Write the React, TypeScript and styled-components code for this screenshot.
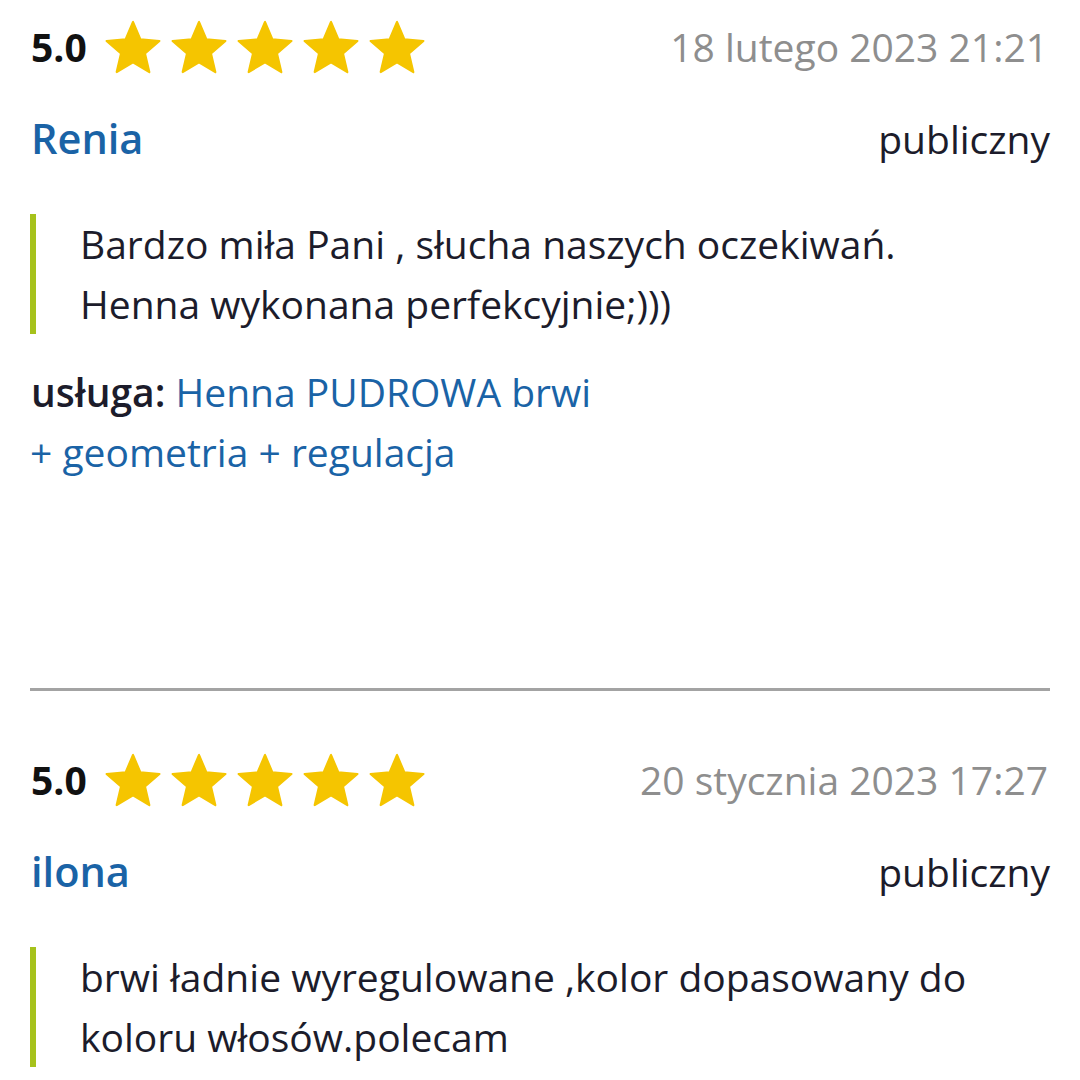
import React from "react";
import styled, { createGlobalStyle } from "styled-components";

const GlobalStyle = createGlobalStyle`
  html, body {
    margin: 0;
    padding: 0;
    background: #ffffff;
  }
  body {
    font-family: "Open Sans", "Noto Sans", "Liberation Sans", sans-serif;
    font-size: 39px;
    line-height: 60px;
    color: #1c1c2b;
  }
`;

const Page = styled.div`
  width: 1080px;
  height: 1080px;
  overflow: hidden;
  padding: 0 30px;
  box-sizing: border-box;
  display: flex;
  flex-direction: column;
`;

const Review = styled.article<{ $last?: boolean }>`
  display: flex;
  flex-direction: column;
  padding-top: 17px;
  padding-bottom: ${(p) => (p.$last ? "0" : "206px")};
  border-bottom: ${(p) => (p.$last ? "none" : "3px solid #a3a3a3")};
  margin-bottom: ${(p) => (p.$last ? "0" : "42px")};
`;

const TopRow = styled.div`
  display: flex;
  align-items: center;
  justify-content: space-between;
  height: 60px;
`;

const RatingGroup = styled.div`
  display: flex;
  align-items: center;
`;

const Score = styled.span`
  font-weight: 700;
  color: #111111;
  margin-left: 1px;
  margin-right: 18px;
`;

const Stars = styled.div`
  display: flex;
  align-items: center;
  gap: 10px;
`;

const StarIcon = styled.svg`
  width: 56px;
  height: 54px;
  display: block;
`;

const DateText = styled.span`
  color: #8e8e8e;
  margin-right: 2px;
`;

const NameRow = styled.div`
  display: flex;
  align-items: baseline;
  justify-content: space-between;
  margin-top: 31px;
`;

const Author = styled.span`
  font-weight: 600;
  font-size: 41.5px;
  color: #1a63a6;
  margin-left: 1px;
`;

const Visibility = styled.span`
  color: #1c1c2b;
`;

const Quote = styled.blockquote`
  margin: 45px 0 0 0;
  border-left: 6px solid #a6c21c;
  padding: 0 60px 0 44px;
`;

const Service = styled.div`
  margin-top: 28px;
  max-width: 578px;
`;

const ServiceLabel = styled.span`
  font-weight: 600;
  color: #1c1c2b;
  margin-left: 1px;
`;

const ServiceLink = styled.a`
  color: #1a63a6;
  text-decoration: none;
`;

const Star = () => (
  <StarIcon viewBox="1.4 1.4 21.2 20.2" aria-hidden="true">
    <path
      d="M12 17.27L18.18 21l-1.64-7.03L22 9.24l-7.19-.61L12 2 9.19 8.63 2 9.24l5.46 4.73L5.82 21z"
      fill="#f5c500"
      stroke="#f5c500"
      strokeWidth="0.8"
      strokeLinejoin="round"
    />
  </StarIcon>
);

type ReviewData = {
  date: string;
  author: string;
  text: string;
  service?: string;
};

const reviews: ReviewData[] = [
  {
    date: "18 lutego 2023 21:21",
    author: "Renia",
    text: "Bardzo miła Pani , słucha naszych oczekiwań. Henna wykonana perfekcyjnie;)))",
    service: "Henna PUDROWA brwi + geometria + regulacja",
  },
  {
    date: "20 stycznia 2023 17:27",
    author: "ilona",
    text: "brwi ładnie wyregulowane ,kolor dopasowany do koloru włosów.polecam",
  },
];

export default function App() {
  return (
    <>
      <GlobalStyle />
      <Page>
        {reviews.map((r, i) => (
          <Review key={i} $last={i === reviews.length - 1}>
            <TopRow>
              <RatingGroup>
                <Score>5.0</Score>
                <Stars>
                  {[0, 1, 2, 3, 4].map((s) => (
                    <Star key={s} />
                  ))}
                </Stars>
              </RatingGroup>
              <DateText>{r.date}</DateText>
            </TopRow>
            <NameRow>
              <Author>{r.author}</Author>
              <Visibility>publiczny</Visibility>
            </NameRow>
            <Quote>{r.text}</Quote>
            {r.service && (
              <Service>
                <ServiceLabel>usługa:</ServiceLabel>{" "}
                <ServiceLink href="#">{r.service}</ServiceLink>
              </Service>
            )}
          </Review>
        ))}
      </Page>
    </>
  );
}
